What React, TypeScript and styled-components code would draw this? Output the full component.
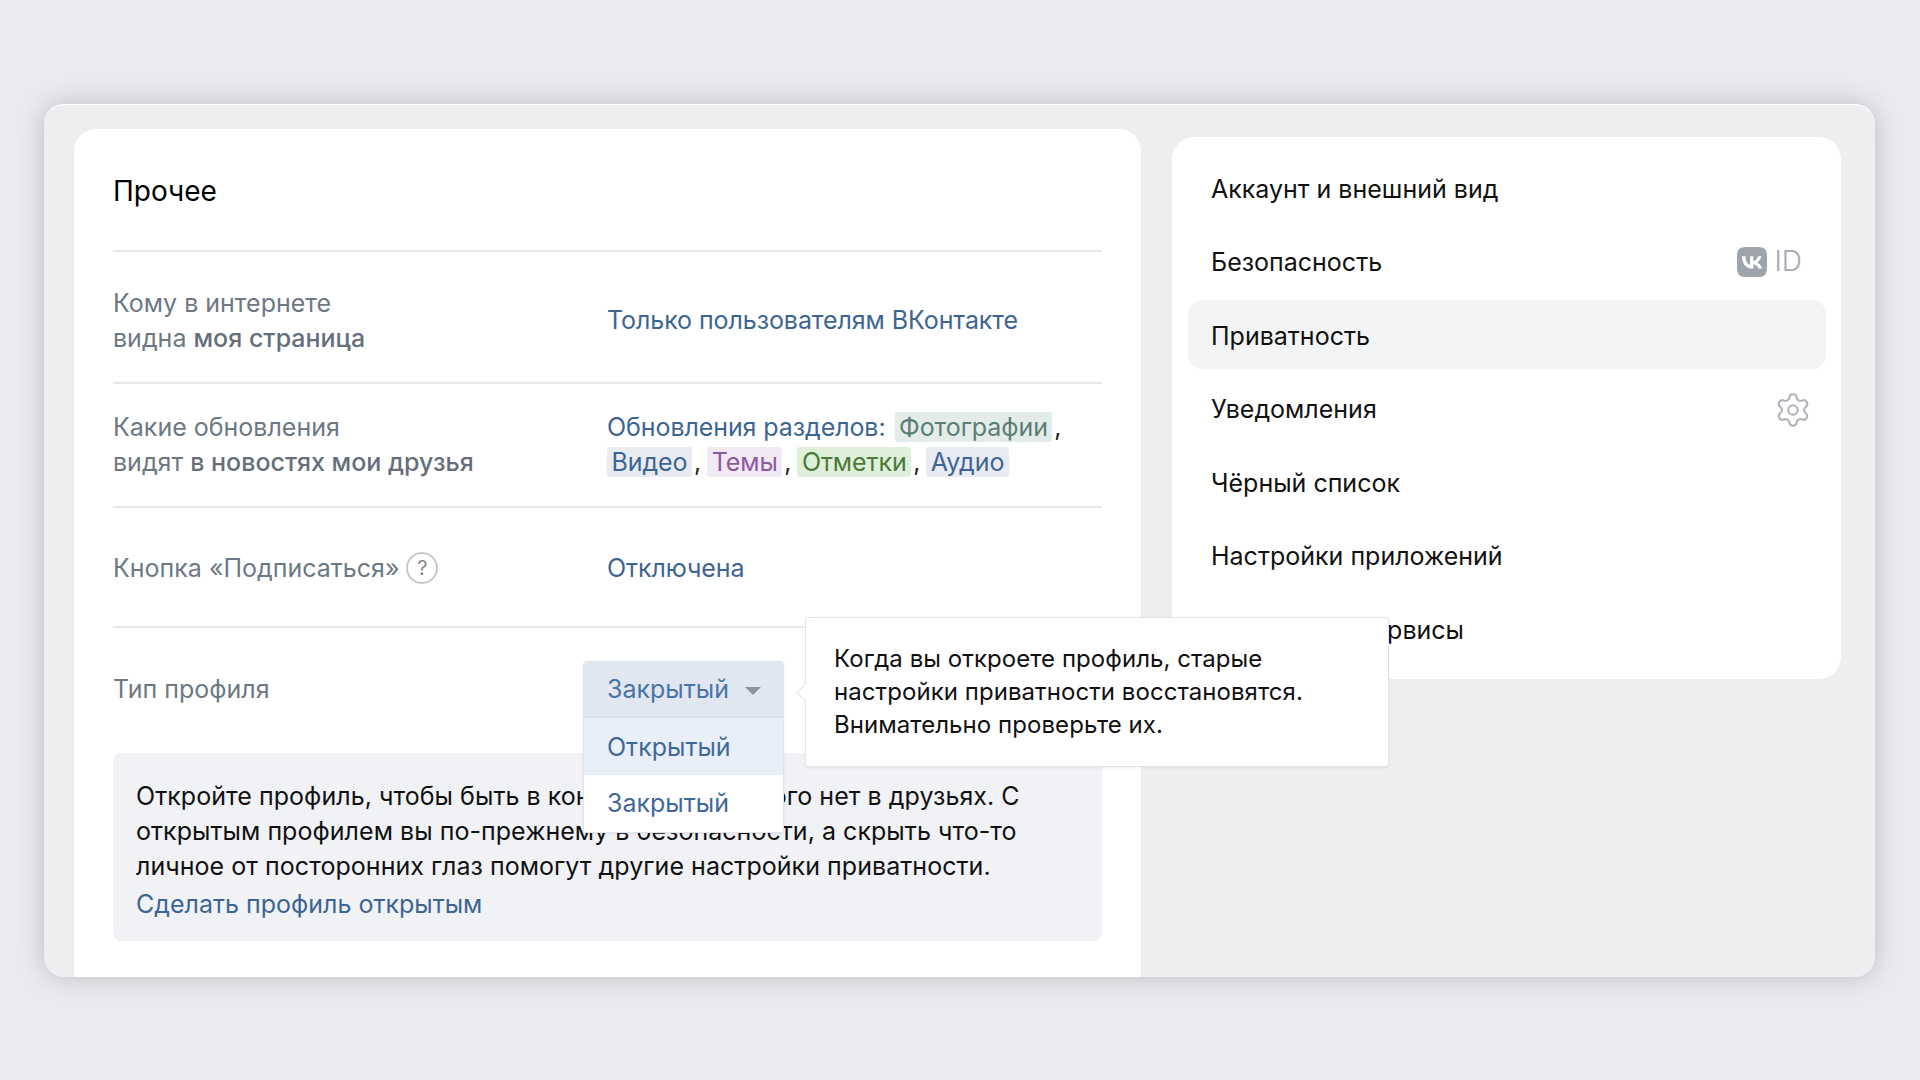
import React from 'react';
import styled, { createGlobalStyle } from 'styled-components';
import { Settings } from 'lucide-react';
import { SiVk } from 'react-icons/si';

const GlobalStyle = createGlobalStyle`
  html, body {
    margin: 0;
    padding: 0;
    background: #ebebef;
  }
  body {
    font-family: Inter, "Noto Sans", "Liberation Sans", sans-serif;
    font-size: 25px;
    line-height: 35px;
    -webkit-font-smoothing: antialiased;
  }
`;

const menu = [
  'Аккаунт и внешний вид',
  'Безопасность',
  'Приватность',
  'Уведомления',
  'Чёрный список',
  'Настройки приложений',
  'Связанные сервисы',
];

const App = () => {
  return (
    <Page>
      <GlobalStyle />
      <Frame>
        <MainCard>
          <Title>Прочее</Title>
          <Row $height={132} $shift={7}>
            <Label>
              Кому в интернете
              <br />
              видна <b>моя страница</b>
            </Label>
            <Value>Только пользователям ВКонтакте</Value>
          </Row>
          <Row $height={124}>
            <Label>
              Какие обновления
              <br />
              видят <b>в новостях мои друзья</b>
            </Label>
            <Value>
              Обновления разделов:<HeadTag $bg="#e3ece9" $fg="#5d7d75">Фотографии</HeadTag>
              <Comma>,</Comma>
              <br />
              <FirstTag $bg="#e8ecf2" $fg="#3d6493">Видео</FirstTag>
              <Comma>,</Comma>
              <Tag $bg="#f1e9f3" $fg="#8e5a9f">Темы</Tag>
              <Comma>,</Comma>
              <Tag $bg="#e0efd9" $fg="#4a7a3a">Отметки</Tag>
              <Comma>,</Comma>
              <Tag $bg="#e8ecf2" $fg="#3f6498">Аудио</Tag>
            </Value>
          </Row>
          <Row $height={120} $shift={2}>
            <HintLabel>
              Кнопка «Подписаться»<Hint>?</Hint>
            </HintLabel>
            <Value>Отключена</Value>
          </Row>
          <ProfileRow>
            <ProfileLabel>Тип профиля</ProfileLabel>
            <SelectSlot>
              <Dropdown>
                <DropdownHead>
                  Закрытый
                  <Caret />
                </DropdownHead>
                <DropdownItem $hover>Открытый</DropdownItem>
                <DropdownItem>Закрытый</DropdownItem>
              </Dropdown>
              <Tooltip>
                Когда вы откроете профиль, старые
                <br />
                настройки приватности восстановятся.
                <br />
                Внимательно проверьте их.
              </Tooltip>
            </SelectSlot>
          </ProfileRow>
          <InfoBox>
            Откройте профиль, чтобы быть в контакте с теми, кого нет в друзьях. С
            <br />
            открытым профилем вы по-прежнему в безопасности, а скрыть что-то
            <br />
            личное от посторонних глаз помогут другие настройки приватности.
            <InfoLink>Сделать профиль открытым</InfoLink>
          </InfoBox>
        </MainCard>
        <SideCard>
          {menu.map((item, i) => (
            <MenuItem key={item} $active={i === 2} $wide={i === 6}>
              {item}
              {i === 1 && (
                <VkId>
                  <SiVk size={30} color="#9ea3ac" />
                  <VkIdText>ID</VkIdText>
                </VkId>
              )}
              {i === 3 && <Settings size={38} strokeWidth={1.3} color="#aeb2b8" />}
            </MenuItem>
          ))}
        </SideCard>
      </Frame>
    </Page>
  );
};

const Page = styled.div`
  width: 1920px;
  height: 1080px;
  padding: 104px 45px 103px 44px;
  box-sizing: border-box;
  overflow: hidden;
`;

const Frame = styled.div`
  display: flex;
  align-items: flex-start;
  height: 873px;
  padding: 25px 34px 0 30px;
  box-sizing: border-box;
  gap: 31px;
  background: #edeef0;
  border-radius: 20px;
  box-shadow: 0 0 26px rgba(0, 0, 0, 0.2), inset 0 1px 0 #fff;
`;

const MainCard = styled.div`
  width: 1067px;
  height: 848px;
  padding: 0 39px;
  box-sizing: border-box;
  background: #fff;
  border-radius: 22px 22px 0 0;
`;

const Title = styled.div`
  height: 121px;
  display: flex;
  align-items: center;
  padding-top: 3px;
  box-sizing: border-box;
  font-size: 28px;
  color: #000;
`;

const Row = styled.div<{ $height: number; $shift?: number }>`
  display: grid;
  grid-template-columns: 494px 1fr;
  align-items: center;
  height: ${(p) => p.$height}px;
  padding-top: ${(p) => p.$shift ?? 0}px;
  box-sizing: border-box;
  border-top: 2px solid #e7e8ec;
`;

const ProfileRow = styled(Row).attrs({ $height: 127 })`
  align-items: start;
  padding-top: 43px;
`;

const Label = styled.div`
  color: #6d7885;

  b {
    font-weight: 500;
    color: #656f7b;
  }
`;

const HintLabel = styled(Label)`
  display: flex;
  align-items: center;
`;

const ProfileLabel = styled(Label)`
  padding-top: 1px;
`;

const Value = styled.div`
  color: #3d6493;
  letter-spacing: -0.08px;
`;

const Tag = styled.span<{ $bg: string; $fg: string }>`
  display: inline-block;
  height: 30px;
  line-height: 30px;
  padding: 0 4.5px;
  margin-left: 6px;
  border-radius: 3px;
  background: ${(p) => p.$bg};
  color: ${(p) => p.$fg};
`;

const FirstTag = styled(Tag)`
  margin-left: 0;
`;

const HeadTag = styled(Tag)`
  margin-left: 9px;
`;

const Comma = styled.span`
  margin-left: 2px;
  color: #222;
`;

const Hint = styled.span`
  display: inline-flex;
  align-items: center;
  justify-content: center;
  flex-shrink: 0;
  width: 32px;
  height: 32px;
  margin-left: 7px;
  box-sizing: border-box;
  border: 2px solid #c6c9ce;
  border-radius: 50%;
  color: #85898f;
  font-size: 20px;
`;

const SelectSlot = styled.div`
  position: relative;
`;

const Dropdown = styled.div`
  position: absolute;
  left: -24px;
  top: -10px;
  width: 201px;
  border: 1px solid #e0e3e9;
  border-radius: 4px;
  box-sizing: border-box;
  background: #fff;
  box-shadow: 0 1px 3px rgba(0, 0, 0, 0.08);
  overflow: hidden;
`;

const DropdownHead = styled.div`
  display: flex;
  align-items: center;
  height: 56px;
  padding-left: 23px;
  background: #e1e7f1;
  border-bottom: 2px solid #d9dfe8;
  box-sizing: border-box;
  color: #4a74a8;
`;

const Caret = styled.span`
  width: 0;
  height: 0;
  margin-left: 16px;
  margin-top: 3px;
  border-left: 8px solid transparent;
  border-right: 8px solid transparent;
  border-top: 8px solid #8f949c;
`;

const DropdownItem = styled.div<{ $hover?: boolean }>`
  display: flex;
  align-items: center;
  height: 57px;
  padding: ${(p) => (p.$hover ? '2px' : '0')} 0 0 23px;
  box-sizing: border-box;
  background: ${(p) => (p.$hover ? '#e9eff8' : '#fff')};
  color: #41689a;
`;

const Tooltip = styled.div`
  position: absolute;
  left: 198px;
  top: -54px;
  z-index: 2;
  width: 584px;
  height: 150px;
  padding: 24px 28px 0;
  box-sizing: border-box;
  background: #fff;
  border: 1px solid #e3e4e8;
  border-radius: 3px;
  box-shadow: 0 1px 3px rgba(0, 0, 0, 0.06);
  font-size: 24px;
  line-height: 33px;
  letter-spacing: 0.06px;
  color: #111;

  &::before {
    content: '';
    position: absolute;
    left: -7px;
    top: 68px;
    width: 12px;
    height: 12px;
    background: #fff;
    border-left: 1px solid #e3e4e8;
    border-bottom: 1px solid #e3e4e8;
    transform: rotate(45deg);
  }
`;

const InfoBox = styled.div`
  height: 188px;
  padding: 26px 23px 0;
  box-sizing: border-box;
  background: #f0f2f5;
  border-radius: 8px;
  color: #111;
  white-space: nowrap;
  letter-spacing: 0.04px;
`;

const InfoLink = styled.div`
  margin-top: 3px;
  color: #3d6493;
  letter-spacing: 0;
`;

const SideCard = styled.div`
  display: flex;
  flex-direction: column;
  gap: 4.6px;
  width: 669px;
  margin-top: 8px;
  padding: 16px 15px 15px 16px;
  box-sizing: border-box;
  background: #fff;
  border-radius: 22px;
`;

const MenuItem = styled.div<{ $active?: boolean; $wide?: boolean }>`
  display: flex;
  align-items: center;
  justify-content: space-between;
  height: 69px;
  padding: 3px 14px 0 23px;
  box-sizing: border-box;
  border-radius: 14px;
  background: ${(p) => (p.$active ? '#f2f4f6' : 'transparent')};
  color: #111;
  word-spacing: ${(p) => (p.$wide ? '5px' : '0')};
`;

const VkId = styled.span`
  display: flex;
  align-items: center;
  gap: 8px;
  margin: -2px 10px 0 0;
`;

const VkIdText = styled.span`
  font-size: 28px;
  font-weight: 300;
  color: #a3a8b0;
`;

export default App;
